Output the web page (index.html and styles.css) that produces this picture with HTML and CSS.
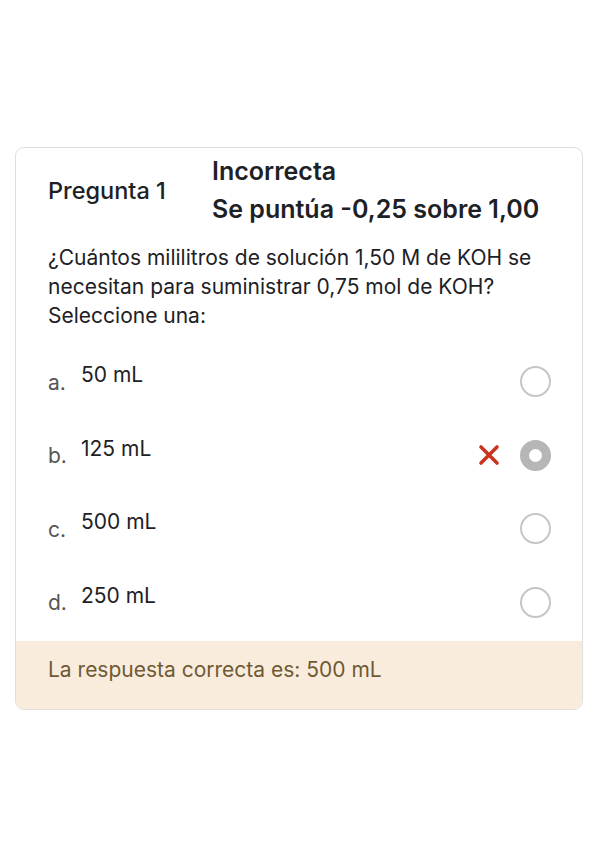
FILE: index.html
```html
<!DOCTYPE html>
<html lang="es">
<head>
    <meta charset="UTF-8">
    <meta name="viewport" content="width=device-width, initial-scale=1.0">
    <title>Pregunta 1</title>
    <link rel="stylesheet" href="styles.css">
</head>
<body>

    <!-- Tarjeta de la pregunta -->
    <div class="que">
        <div class="info">
            <div class="qno">Pregunta 1</div>
            <div class="state">
                <div>Incorrecta</div>
                <div>Se puntúa -0,25 sobre 1,00</div>
            </div>
        </div>

        <div class="qtext">
            ¿Cuántos mililitros de solución 1,50 M de KOH se necesitan para suministrar 0,75 mol de KOH?
        </div>
        <div class="prompt">Seleccione una:</div>

        <div class="answer">
            <div class="opt">
                <span class="letter">a.</span>
                <span class="value">50 mL</span>
                <span class="radio"></span>
            </div>
            <div class="opt">
                <span class="letter">b.</span>
                <span class="value">125 mL</span>
                <svg class="wrong" width="22" height="22" viewBox="0 0 22 22">
                    <path d="M3 3 L19 19 M19 3 L3 19" stroke="#c9341f" stroke-width="3.6" stroke-linecap="round"/>
                </svg>
                <span class="radio checked"></span>
            </div>
            <div class="opt">
                <span class="letter">c.</span>
                <span class="value">500 mL</span>
                <span class="radio"></span>
            </div>
            <div class="opt">
                <span class="letter">d.</span>
                <span class="value">250 mL</span>
                <span class="radio"></span>
            </div>
        </div>

        <!-- Retroalimentación -->
        <div class="outcome">La respuesta correcta es: 500 mL</div>
    </div>

</body>
</html>
```

FILE: styles.css
```css
body {
    font-family: Inter, "Noto Sans", sans-serif;
    background-color: #fff;
    color: #1d2125;
    margin: 0;
    padding: 147px 16px 0 15px;
}
.que {
    border: 1px solid #dedede;
    border-radius: 9px;
    overflow: hidden;
}
.info {
    display: flex;
    align-items: center;
    padding: 4px 32px 0 32px;
}
.qno {
    width: 164px;
    font-size: 23.5px;
    font-weight: 500;
}
.state {
    font-size: 25px;
    font-weight: 600;
    line-height: 38px;
}
.qtext, .prompt {
    padding: 0 32px;
    font-size: 21px;
    line-height: 29px;
}
.qtext {
    margin-top: 15px;
}
.answer {
    padding: 15px 31px 2px 32px;
}
.opt {
    display: flex;
    align-items: center;
    height: 73.5px;
    font-size: 21px;
}
.letter {
    width: 33px;
    color: #555;
    padding-top: 1px;
}
.value {
    flex: 1;
    padding-bottom: 14px;
}
.wrong {
    margin-right: 20px;
}
.radio {
    width: 31px;
    height: 31px;
    border: 2px solid #c6c6c6;
    border-radius: 50%;
    box-sizing: border-box;
}
.radio.checked {
    border: 9px solid #b6b6b6;
}
.outcome {
    background-color: #faecdc;
    color: #6e5a35;
    font-size: 21px;
    line-height: 25px;
    padding: 16px 32px 27px 32px;
}
```
